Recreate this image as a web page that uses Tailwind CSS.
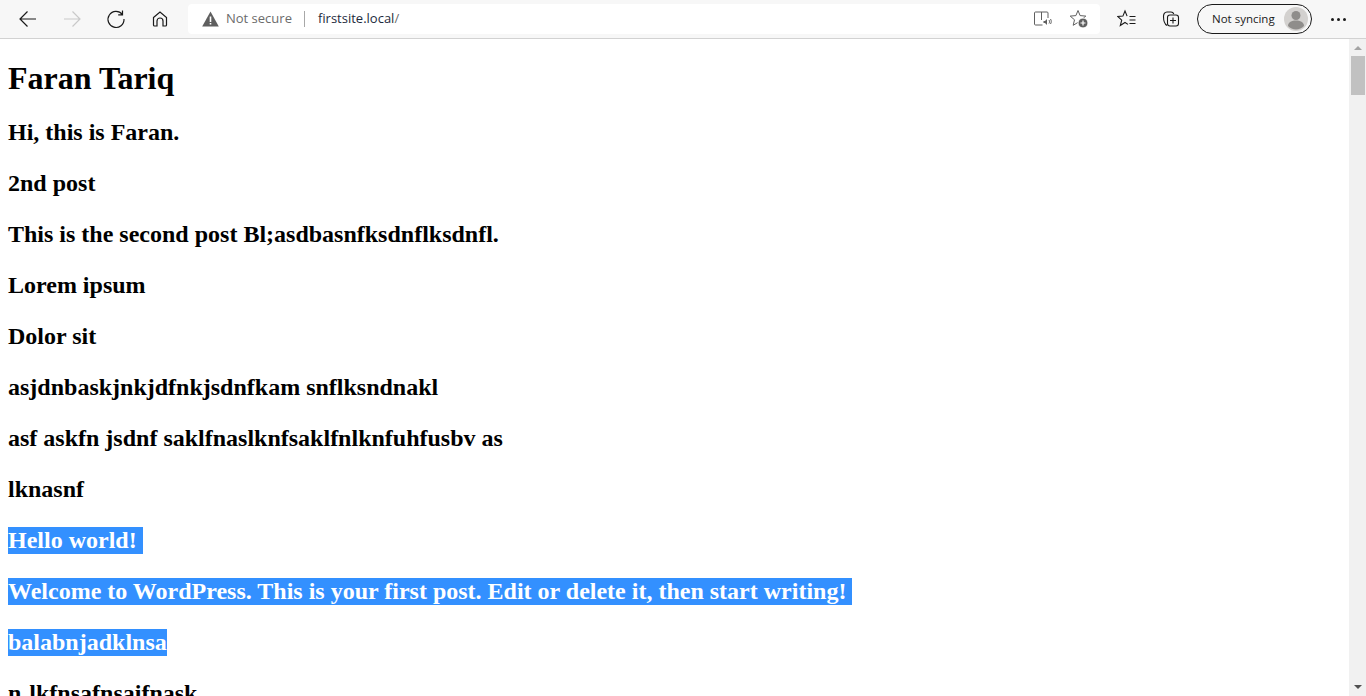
<!DOCTYPE html>
<html lang="en">
  <head>
    <meta charset="UTF-8" />
    <script src="https://cdn.jsdelivr.net/npm/@tailwindcss/browser@4"></script>
    <title>Faran Tariq</title>
  </head>
  <body class="h-[696px] overflow-hidden flex flex-col bg-white">
    <!-- browser toolbar -->
    <header class="h-[39px] shrink-0 flex items-center bg-[#f7f7f7] border-b border-[#d2d2d2] font-['Open_Sans',sans-serif] text-[#1a1a1a]">
      <div class="w-[188px] shrink-0 flex items-center pl-[17px] gap-[22px]">
        <svg width="22" height="22" viewBox="0 0 22 22" fill="none" stroke="#1a1a1a" stroke-width="1.2"><path d="M3 11h16M10.500 3.500 3 11l7.500 7.500" /></svg>
        <svg width="22" height="22" viewBox="0 0 22 22" fill="none" stroke="#c9c9c9" stroke-width="1.2"><path d="M3 11h16M11.500 3.500 19 11l-7.500 7.500" /></svg>
        <svg width="22" height="22" viewBox="0 0 22 22" fill="none" stroke="#1a1a1a" stroke-width="1.2"><path d="M17.300 6.500A8 8 0 1 0 19 11M17.500 2.500v4.300h-4.300" /></svg>
        <svg width="22" height="22" viewBox="0 0 22 22" fill="none" stroke="#1a1a1a" stroke-width="1.2"><path d="M4.500 9.500 11 4l6.500 5.500V17a1 1 0 0 1-1 1H14v-5a3 3 0 0 0-6 0v5H5.500a1 1 0 0 1-1-1z" /></svg>
      </div>
      <div class="w-[912px] h-[30px] shrink-0 flex items-center bg-white rounded-[4px] mt-[-1px] pl-[14px]">
        <svg width="17" height="16" viewBox="0 0 17 16" class="shrink-0"><path d="M8.500 0.500 16.800 15.500H0.200z" fill="#5f5f5f" /><path d="M7.700 5.500h1.600v5.500H7.700zM7.700 12h1.600v1.600H7.700z" fill="#fff" /></svg>
        <span class="ml-[7px] text-[13px] text-[#6b6b6b]">Not secure</span>
        <span class="ml-[12px] h-[16px] w-px bg-[#a8a8a8]"></span>
        <span class="ml-[13px] text-[13px] text-[#1d2a3c]">firstsite.local<span class="text-[#6b6b6b]">/</span></span>
        <div class="ml-auto flex items-center gap-[17px] pr-[12px]">
          <svg width="18" height="16" viewBox="0 0 18 16" fill="none" stroke="#5f5f5f" stroke-width="1"><path d="M8.500 14H1.500a1 1 0 0 1-1-1V2a1 1 0 0 1 1-1h11.500a1 1 0 0 1 1 1v5M7.500 1v8" /><path d="M9.500 10h1.500l2-2v6l-2-2H9.500z" fill="#5f5f5f" stroke="none" /><path d="M15 9c.7 1 .7 2.500 0 3.500M16.500 8c1 1.500 1 3.500 0 5" /></svg>
          <svg width="19" height="19" viewBox="0 0 19 19" fill="none" stroke="#5f5f5f" stroke-width="1"><path d="M9 1.500 11.100 6.600 16.800 7.100 12.500 10.800 13.800 16.300 9 13.400 4.200 16.300 5.500 10.800 1.200 7.100 6.900 6.600z" /><circle cx="14" cy="14" r="5" fill="#5f5f5f" stroke="#fff" stroke-width="1" /><path d="M14 11.500v5M11.500 14h5" stroke="#fff" stroke-width="1.200" /></svg>
        </div>
      </div>
      <div class="flex-1 flex items-center pl-[17px]">
        <svg width="20" height="20" viewBox="0 0 20 20" fill="none" stroke="#1a1a1a" stroke-width="1.100"><path d="M10.100 7.100 8 2 5.900 7.100 0.700 7.500 4.700 11.100 3.300 16.500 8 13.500 11 15.400" /><path d="M12.500 7.500h6M12.500 11h6M12.500 14.500h6" /></svg>
        <svg width="20" height="20" viewBox="0 0 20 20" fill="none" stroke="#1a1a1a" stroke-width="1.100" class="ml-[24px]"><path d="M6 16.500C3.500 15 2.500 12 2.500 7.500c0-2.500 1-4.500 3.500-4.500h4a3 3 0 0 1 2.800 2" /><rect x="6.500" y="6" width="11" height="11" rx="2.500" /><path d="M12 8.500v6M9 11.500h6" /></svg>
        <div class="ml-[16px] w-[115px] h-[30px] flex items-center justify-between rounded-full border border-[#1a1a1a] pl-[14px] pr-[3px]">
          <span class="text-[11.5px]">Not syncing</span>
          <svg width="24" height="24" viewBox="0 0 24 24"><circle cx="12" cy="12" r="12" fill="#d3d1cf" /><circle cx="12" cy="8.500" r="4.500" fill="#8f8d8b" /><path d="M4 19c0-4 4-5.500 8-5.500s8 1.500 8 5.500a11 11 0 0 1-16 0z" fill="#8f8d8b" /></svg>
        </div>
        <div class="ml-[19px] flex gap-[3px]">
          <span class="w-[3px] h-[3px] rounded-full bg-[#1a1a1a]"></span>
          <span class="w-[3px] h-[3px] rounded-full bg-[#1a1a1a]"></span>
          <span class="w-[3px] h-[3px] rounded-full bg-[#1a1a1a]"></span>
        </div>
      </div>
    </header>

    <div class="flex-1 min-h-0 flex">
      <!-- page content -->
      <main class="flex-1 min-w-0 overflow-hidden pl-2 pt-[21px] font-['Liberation_Serif',serif] font-bold text-black text-2xl leading-[27px]">
        <h1 class="text-[32px] leading-[37px] mb-[22px]">Faran Tariq</h1>
        <div class="flex flex-col items-start gap-6">
          <p>Hi, this is Faran.</p>
          <p>2nd post</p>
          <p>This is the second post Bl;asdbasnfksdnflksdnfl.</p>
          <p>Lorem ipsum</p>
          <p>Dolor sit</p>
          <p>asjdnbaskjnkjdfnkjsdnfkam snflksndnakl</p>
          <p>asf askfn jsdnf saklfnaslknfsaklfnlknfuhfusbv as</p>
          <p>lknasnf</p>
          <p class="bg-[#3390ff] text-white pr-[6px]">Hello world!</p>
          <p class="bg-[#3390ff] text-white pr-[6px]">Welcome to WordPress. This is your first post. Edit or delete it, then start writing!</p>
          <p class="bg-[#3390ff] text-white">balabnjadklnsa</p>
          <p class="[word-spacing:2px]">n lkfnsafnsaifnask</p>
        </div>
      </main>

      <!-- scrollbar -->
      <div class="w-[17px] shrink-0 flex flex-col items-center justify-between bg-[#f1f1f1]">
        <div class="w-full flex flex-col items-center">
          <span class="mt-[7px] w-0 h-0 border-x-[4px] border-x-transparent border-b-[4px] border-b-[#a3a3a3]"></span>
          <span class="mt-[6px] self-start ml-[2px] w-[14px] h-[39px] bg-[#c1c1c1]"></span>
        </div>
        <span class="mb-[7px] w-0 h-0 border-x-[4px] border-x-transparent border-t-[4px] border-t-[#505050]"></span>
      </div>
    </div>
  </body>
</html>
